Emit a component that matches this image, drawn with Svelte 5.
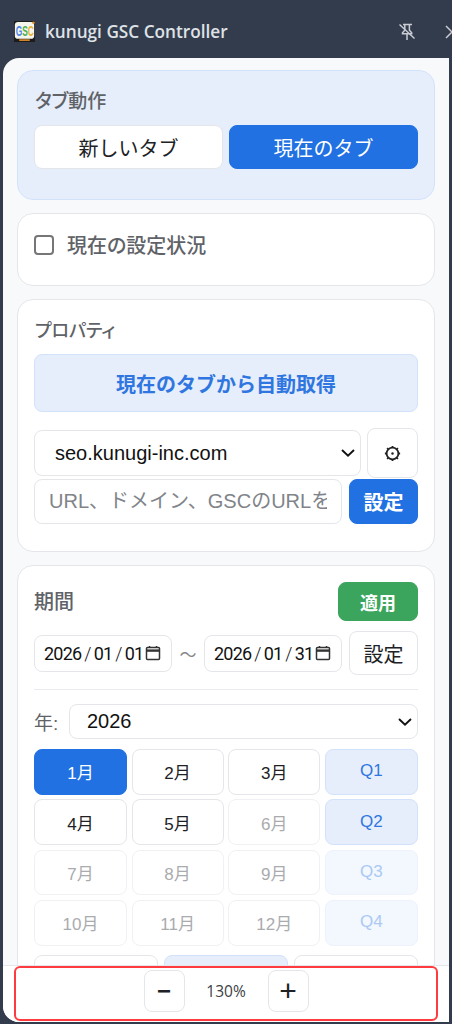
<script>
  const months = [
    [{ t: '1月', k: 'on' }, { t: '2月' }, { t: '3月' }, { t: 'Q1', k: 'q' }],
    [{ t: '4月' }, { t: '5月' }, { t: '6月', k: 'off' }, { t: 'Q2', k: 'q' }],
    [{ t: '7月', k: 'off' }, { t: '8月', k: 'off' }, { t: '9月', k: 'off' }, { t: 'Q3', k: 'qoff' }],
    [{ t: '10月', k: 'off' }, { t: '11月', k: 'off' }, { t: '12月', k: 'off' }, { t: 'Q4', k: 'qoff' }]
  ];
</script>

<div class="window">
  <header class="titlebar">
    <svg class="logo" viewBox="0 0 20 20" width="21" height="21">
      <rect width="20" height="20" fill="#1c1c1c" />
      <rect x="0.8" y="1" width="18.4" height="16" rx="3" fill="#f4f6ee" />
      <g transform="translate(1.6 14) scale(0.76 1.25)">
        <text font-size="10.5" font-weight="700" font-family="Liberation Sans, sans-serif"><tspan fill="#4f86e8">G</tspan><tspan fill="#4caf50">S</tspan><tspan fill="#e9b33a">C</tspan></text>
      </g>
      <rect x="5" y="17.4" width="10" height="1.6" fill="#d98a2b" />
      <circle cx="18.6" cy="1.6" r="1.2" fill="#e8912d" />
    </svg>
    <span class="title">kunugi GSC Controller</span>
    <svg class="unpin" viewBox="0 0 18 18" width="18" height="18" fill="none" stroke="#c9ccd3" stroke-width="1.5">
      <path d="M5 1.5h9M6.8 1.5v5.7L4.5 9.8v1h9.2v-1l-2.3-2.6V1.5M9 11v6" />
      <path d="M1.5 1.5l15 14" />
    </svg>
    <svg class="close" viewBox="0 0 14 14" width="14" height="14" fill="none" stroke="#c9ccd3" stroke-width="1.5">
      <path d="M1 1l12 12M13 1L1 13" />
    </svg>
  </header>

  <main class="panel">
    <div class="scroll">
      <section class="card tabs">
        <h2>タブ動作</h2>
        <div class="tabrow">
          <button class="btn tab">新しいタブ</button>
          <button class="btn tab primary">現在のタブ</button>
        </div>
      </section>

      <section class="card status">
        <span class="check"></span>
        <h2>現在の設定状況</h2>
      </section>

      <section class="card property">
        <h2>プロパティ</h2>
        <button class="btn auto">現在のタブから自動取得</button>
        <div class="selectrow">
          <div class="select site">
            <span>seo.kunugi-inc.com</span>
            <svg viewBox="0 0 14 8" width="14" height="8" fill="none" stroke="#111" stroke-width="1.9"><path d="M1 1l6 5.6L13 1" /></svg>
          </div>
          <button class="btn gear" aria-label="settings">
            <svg viewBox="0 0 20 20" width="19" height="19" fill="none" stroke="#222" stroke-width="1.9">
              <circle cx="10" cy="10" r="6.2" />
              <circle cx="10" cy="10" r="1.3" fill="#222" stroke="none" />
              <path d="M10 2v1.6M10 16.4V18M2 10h1.6M16.4 10H18M4.3 4.3l1.2 1.2M14.5 14.5l1.2 1.2M15.7 4.3l-1.2 1.2M5.5 14.5l-1.2 1.2" />
            </svg>
          </button>
        </div>
        <div class="inputrow">
          <input class="url" placeholder="URL、ドメイン、GSCのURLを" />
          <button class="btn primary set">設定</button>
        </div>
      </section>

      <section class="card period">
        <div class="periodhead">
          <h2>期間</h2>
          <button class="btn apply">適用</button>
        </div>
        <div class="daterow">
          <div class="date">
            <span>2026</span><i>/</i><span>01</span><i>/</i><span>01</span>
            <svg viewBox="0 0 16 16" width="16" height="16" fill="none" stroke="#333" stroke-width="1.5"><rect x="1.5" y="2.5" width="13" height="12" rx="1" /><path d="M1.5 5.6h13" stroke-width="2.4" /><path d="M4.5 1v2M11.5 1v2" /></svg>
          </div>
          <span class="tilde">～</span>
          <div class="date">
            <span>2026</span><i>/</i><span>01</span><i>/</i><span>31</span>
            <svg viewBox="0 0 16 16" width="16" height="16" fill="none" stroke="#333" stroke-width="1.5"><rect x="1.5" y="2.5" width="13" height="12" rx="1" /><path d="M1.5 5.6h13" stroke-width="2.4" /><path d="M4.5 1v2M11.5 1v2" /></svg>
          </div>
          <button class="btn dateset">設定</button>
        </div>
        <hr />
        <div class="yearrow">
          <label for="y">年:</label>
          <div class="select year" id="y">
            <span>2026</span>
            <svg viewBox="0 0 14 8" width="14" height="8" fill="none" stroke="#111" stroke-width="1.9"><path d="M1 1l6 5.6L13 1" /></svg>
          </div>
        </div>
        <div class="months">
          {#each months as row}
            {#each row as m}
              <button class="btn month {m.k ?? ''}">{m.t}</button>
            {/each}
          {/each}
        </div>
        <div class="extras">
          <button class="btn extra"></button>
          <button class="btn extra blue"></button>
          <button class="btn extra"></button>
        </div>
      </section>
    </div>

    <footer class="zoombar">
      <button class="btn zoombtn">−</button>
      <span class="pct">130%</span>
      <button class="btn zoombtn plus">+</button>
      <div class="highlight"></div>
    </footer>
  </main>
</div>

<style>
  :global(body) {
    margin: 0;
    background: #333c4d;
  }
  * {
    box-sizing: border-box;
  }
  .window {
    width: 452px;
    height: 1024px;
    display: flex;
    flex-direction: column;
    overflow: hidden;
    font-family: "Liberation Sans", "Noto Sans CJK JP", sans-serif;
    background: #333c4d;
  }
  .titlebar {
    height: 58px;
    flex: none;
    display: flex;
    align-items: center;
    padding: 5px 0 0 14px;
    white-space: nowrap;
  }
  .logo {
    flex: none;
  }
  .title {
    margin-left: 10px;
    font-family: "Open Sans", sans-serif;
    font-size: 17.2px;
    font-weight: 600;
    color: #dfe2e7;
    flex: 1;
  }
  .unpin {
    flex: none;
    margin-right: 29px;
  }
  .close {
    flex: none;
    margin-right: -7px;
  }
  .panel {
    flex: 1;
    min-height: 0;
    margin: 0 3px 2px;
    background: #f8f9fb;
    border-radius: 16px 0 0 16px;
    display: flex;
    flex-direction: column;
    overflow: hidden;
  }
  .scroll {
    flex: 1;
    min-height: 0;
    overflow: hidden;
    padding: 12px 14px 0;
    display: flex;
    flex-direction: column;
    gap: 13px;
  }
  .card {
    flex: none;
    background: #fff;
    border: 1px solid #e4e6ea;
    border-radius: 16px;
    padding: 16px;
  }
  h2 {
    margin: 0;
    font-size: 20px;
    font-weight: 500;
    line-height: 24px;
    color: #5f6368;
    font-feature-settings: "palt";
  }
  .btn {
    font-family: inherit;
    background: #fff;
    border: 1px solid #e4e6ea;
    border-radius: 8px;
    padding: 0;
    color: #202124;
    cursor: pointer;
  }
  .primary {
    background: #2171e3;
    border-color: #2171e3;
    color: #fff;
  }
  .tabs {
    height: 130px;
    background: #e6eefc;
    border-color: #d3e2fb;
  }
  .tabs h2 {
    margin: 3px 0 0 1px;
    font-size: 19px;
  }
  .tabrow {
    margin-top: 11px;
    display: flex;
    gap: 6px;
  }
  .tab {
    flex: 1;
    height: 44px;
    font-size: 20px;
  }
  .status {
    height: 73px;
    display: flex;
    align-items: flex-start;
    gap: 13px;
    padding-top: 20px;
  }
  .check {
    width: 20px;
    height: 20px;
    margin-top: 1px;
    border: 2px solid #767676;
    border-radius: 4px;
    background: #fff;
  }
  .property {
    height: 253px;
  }
  .property h2 {
    margin: 3px 0 0 1px;
    font-size: 18px;
  }
  .auto {
    display: block;
    width: 100%;
    height: 58px;
    margin-top: 11px;
    background: #e6eefc;
    border-color: #d3e2fb;
    color: #2f76e0;
    font-size: 20px;
    font-weight: 700;
  }
  .selectrow {
    display: flex;
    align-items: center;
    gap: 6px;
    margin-top: 16px;
  }
  .select {
    background: #fff;
    border: 1px solid #e4e6ea;
    border-radius: 8px;
    display: flex;
    align-items: center;
    justify-content: space-between;
    color: #111;
  }
  .site {
    flex: 1;
    height: 46px;
    padding: 0 5px 0 20px;
    font-size: 20px;
  }
  .gear {
    flex: none;
    width: 51px;
    height: 50px;
    display: flex;
    align-items: center;
    justify-content: center;
  }
  .inputrow {
    display: flex;
    gap: 7px;
    margin-top: 1px;
  }
  .url {
    flex: 1;
    min-width: 0;
    height: 45px;
    padding: 0 14px;
    border: 1px solid #e4e6ea;
    border-radius: 8px;
    font-family: inherit;
    font-size: 20px;
  }
  .url::placeholder {
    color: #80848a;
    opacity: 1;
  }
  .set {
    flex: none;
    width: 69px;
    height: 45px;
    font-size: 20px;
    font-weight: 700;
  }
  .period {
    height: 500px;
  }
  .periodhead {
    display: flex;
    justify-content: space-between;
    align-items: center;
  }
  .apply {
    width: 80px;
    height: 39px;
    background: #3ba55d;
    border-color: #3ba55d;
    color: #fff;
    font-size: 18px;
    font-weight: 700;
  }
  .daterow {
    display: flex;
    align-items: center;
    margin-top: 10px;
  }
  .date {
    width: 138px;
    height: 37px;
    flex: none;
    border: 1px solid #e4e6ea;
    border-radius: 8px;
    display: flex;
    align-items: center;
    padding-left: 9px;
    font-family: "Roboto", "Liberation Sans", sans-serif;
    font-size: 18px;
    letter-spacing: -0.8px;
    color: #111;
  }
  .date i {
    font-style: normal;
    padding: 0 3px;
    font-weight: 300;
  }
  .date svg {
    margin-left: 2px;
  }
  .tilde {
    width: 32px;
    text-align: center;
    flex: none;
    font-size: 17px;
    color: #888;
  }
  .dateset {
    flex: none;
    width: 69px;
    height: 44px;
    margin-left: 7px;
    font-size: 20px;
  }
  hr {
    border: none;
    border-top: 1px solid #e8eaed;
    margin: 14px 0;
  }
  .yearrow {
    display: flex;
    align-items: center;
    gap: 10px;
  }
  label {
    color: #5f6368;
    font-size: 19px;
    width: 25px;
    flex: none;
    white-space: nowrap;
  }
  .year {
    flex: 1;
    height: 35px;
    padding: 0 5px 0 17px;
    font-size: 20px;
  }
  .months {
    display: grid;
    grid-template-columns: 93px 92px 92px 93px;
    grid-auto-rows: 45.7px;
    gap: 4.6px 4.6px;
    margin-top: 10px;
  }
  .month {
    font-size: 17px;
    border-radius: 8px;
  }
  .month.on {
    background: #2171e3;
    border-color: #2171e3;
    color: #fff;
  }
  .month.off {
    color: #a9abae;
    border-color: #f0f1f3;
  }
  .month.q {
    background: #e6eefc;
    border-color: #d3e2fb;
    color: #2f76e0;
    padding-bottom: 1px;
  }
  .month.qoff {
    background: #f3f7fe;
    border-color: #edf2fc;
    color: #abc9f5;
    padding-bottom: 1px;
  }
  .extras {
    display: flex;
    gap: 6px;
    margin-top: 9px;
  }
  .extra {
    flex: 1;
    height: 40px;
  }
  .extra.blue {
    background: #e6eefc;
    border-color: #d3e2fb;
  }
  .zoombar {
    flex: none;
    position: relative;
    height: 57px;
    background: #fff;
    border-top: 1px solid #e4e6ea;
    display: flex;
    align-items: center;
    justify-content: center;
    padding: 0 0 7px 0;
    margin-top: 0;
  }
  .zoombtn {
    width: 41px;
    height: 42px;
    font-size: 24px;
    line-height: 1;
    font-weight: 700;
    color: #202124;
  }
  .plus {
    font-weight: 400;
    font-size: 30px;
  }
  .pct {
    width: 83px;
    text-align: center;
    font-family: "Open Sans", sans-serif;
    font-size: 15.5px;
    color: #3c4043;
  }
  .highlight {
    position: absolute;
    left: 11px;
    top: 0;
    width: 424px;
    height: 55px;
    border: 2px solid #ff3b3f;
    border-radius: 6px;
    pointer-events: none;
  }
</style>
